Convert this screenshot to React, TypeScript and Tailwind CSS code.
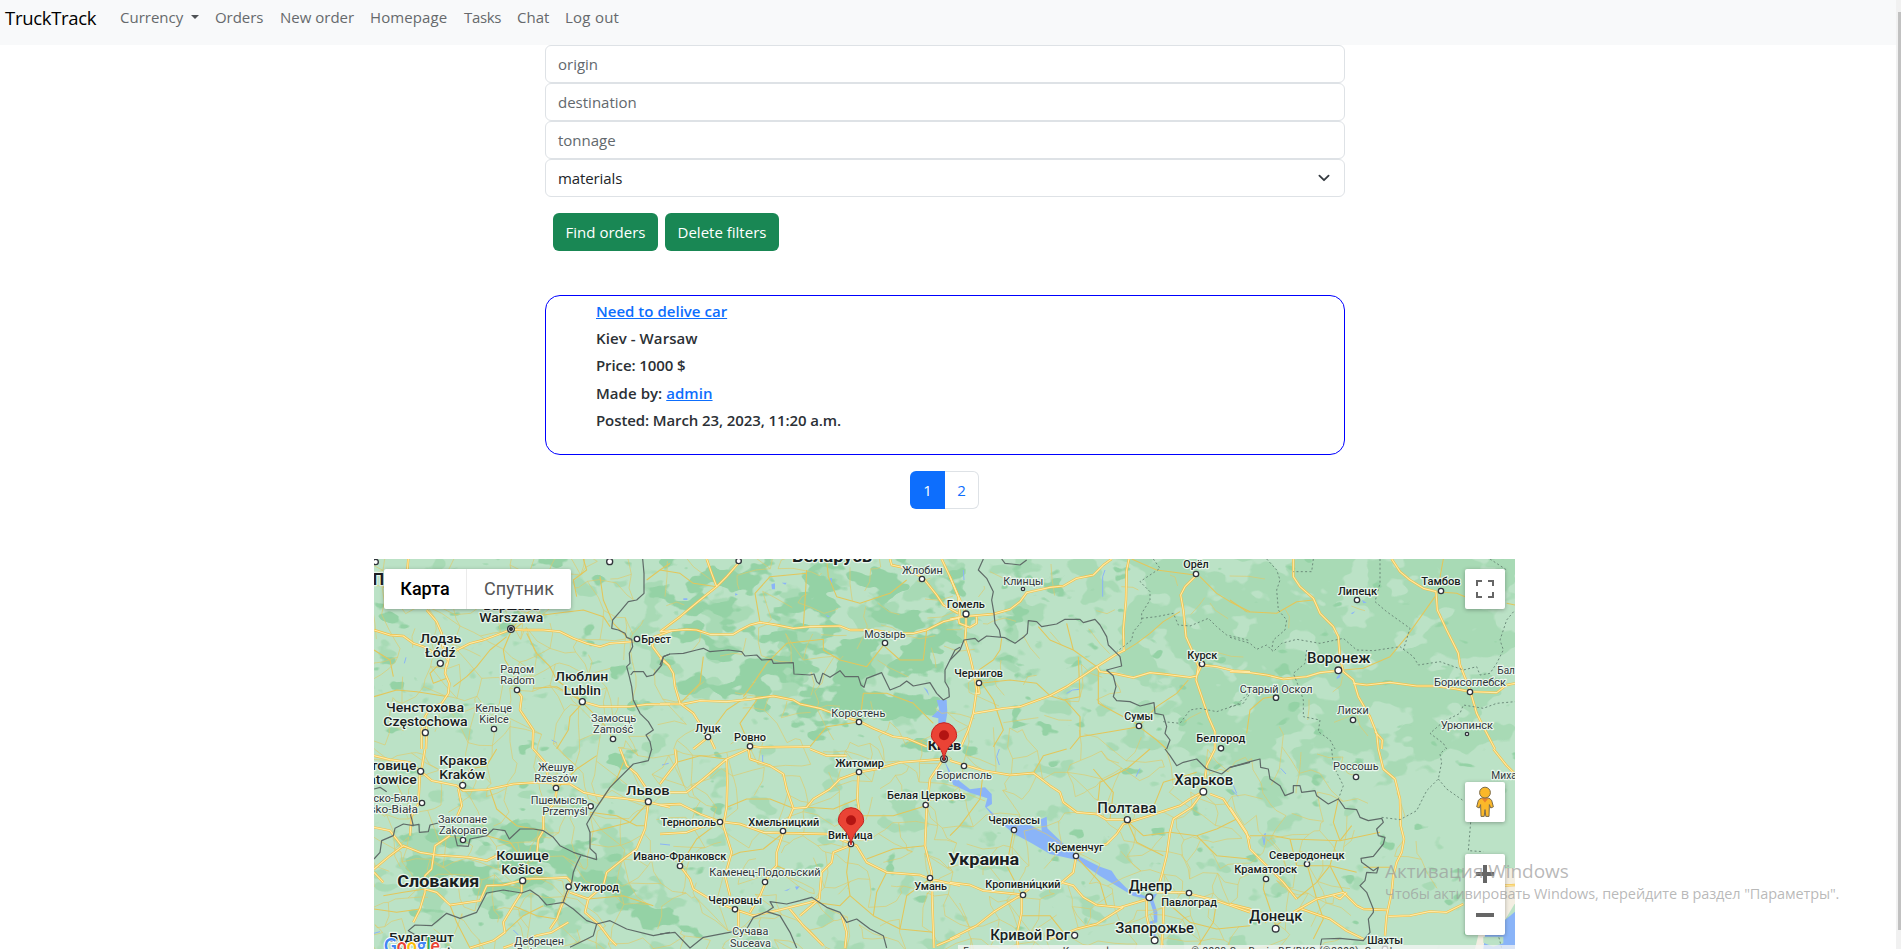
import React from "react";

type Tile = {
  x: number;
  y: number;
  major: string[];
  minor: string[];
  border: string[];
  dotted: string[];
};

/* Map geometry, drawn at three units per pixel and split in eight sheets. */
const tiles: Tile[] = [
  {
    x: 0,
    y: 0,
    major: [
      "M12 240L60 255 100 258 130 280 160 290 205 315",
      "M230 350L236 325 255 303 300 280 340 270 380 255 425 238 460 240 520 240 570 245 610 265 650 280 690 290 720 280 790 275",
      "M230 340L225 370 238 400 235 430 215 460 180 475 165 500 155 540 155 597",
      "M165 500L170 540 168 597",
      "M170 180L200 215 215 250 218 290 232 330",
      "M440 420L455 440 450 480 470 510 490 540 488 597",
      "M637 455L690 470 780 470 830 463 900 462",
      "M115 27L112 60",
      "M905 242L850 262 848 290 870 320 900 350",
    ],
    minor: [
      "M425 240L400 300 405 330 430 370 440 420",
      "M470 250L500 310 540 350 560 390 600 420 637 455",
      "M210 340L180 370 190 400 230 385",
      "M410 260L360 300 320 350 290 380 250 410",
      "M637 460L600 500 595 540 560 597",
      "M640 460L700 520 728 567",
      "M490 415L560 410 630 450",
      "M12 440L80 420 140 425 235 440",
      "M425 235L470 190 520 150 570 120 600 60",
      "M640 27L650 60 610 90 620 140",
      "M12 300L60 330 70 380",
      "M430 240L480 200 560 190 640 180 700 200 720 230",
      "M830 90L870 60 900 40",
      "M780 270L730 220 700 150 690 80",
    ],
    border: [
      "M818 27L822 70 822 130 800 150 775 155 750 185 728 210 725 235 745 240 765 250 770 262 785 268 788 290 778 310 780 340 770 350 778 380 785 410 790 450 800 470 810 490 835 515 850 540 828 555 840 575 845 600",
      "M782 375L790 365 820 365 830 380 850 375 875 345 880 320 900 312",
    ],
    dotted: [],
  },
  {
    x: 870,
    y: 0,
    major: [
      "M0 245L80 238 110 240 150 253 220 253 245 238 270 225 300 217 350 225 400 235 450 230 540 228 570 240 640 240 700 250 760 250 800 240 850 215 900 203",
      "M0 245L60 200 120 150 170 110 200 80 235 40",
      "M170 110L155 70 140 27",
      "M0 325L25 345 40 370 45 410 60 460 100 490 125 530 140 560",
      "M0 462L70 462 120 452 200 455 270 448 340 438 400 450 420 462 480 475 520 490 600 515 640 535 700 560 740 565 800 590",
      "M150 565L165 597",
      "M140 565L100 597",
      "M270 588L300 592 450 590",
      "M845 27L870 80 895 140 900 200",
      "M690 27L695 45 740 55 790 85 830 135 850 165 895 190",
    ],
    minor: [
      "M440 60L437 120 430 230",
      "M300 217L285 130 330 80 440 70",
      "M60 460L120 400 130 320",
      "M250 440L280 400 320 340 380 280 490 268 490 300 540 330 620 350 675 280",
      "M500 27L505 80 530 140 600 160 690 130 740 90",
      "M675 290L720 330 790 330 800 240",
      "M600 515L610 430 680 430 760 460 820 520",
      "M140 560L200 480 260 440",
      "M270 588L240 520 290 450",
      "M0 60L60 70 100 100 170 110",
      "M450 590L500 530 600 515",
    ],
    border: [
      "M0 345L10 320 30 312 70 310 110 300 130 295 150 305 205 300 245 305 255 318 290 315 305 330 335 328 340 340 400 338 402 372 450 375 462 372 470 395 478 402 488 370 510 382 540 362 555 380 595 380 603 405 612 412 620 385 665 368 690 420 720 408 740 393 760 408 810 398 830 430 850 450 868 440 866 415 855 395 855 360 870 330 885 300 900 292",
    ],
    dotted: [],
  },
  {
    x: 1740,
    y: 0,
    major: [
      "M0 80L30 150 48 190 48 230 45 270 60 320 72 370 80 420 70 490 55 540 30 597",
      "M85 400L88 430 76 430",
      "M72 490L160 475 210 470 300 437 350 410 440 350 495 315 525 300",
      "M522 300L520 240 528 150 530 60 537 27",
      "M0 207L40 200 130 192 180 178 210 155 230 128 300 112 340 108 380 85 430 75 460 45 485 27",
      "M25 200L28 220 60 232 80 220 80 200",
      "M440 350L450 365 500 372 550 383 600 368 640 372 720 382 740 378 755 345",
      "M755 345L800 350 850 362 900 365",
      "M740 75L705 110 692 135 700 180 708 260 730 310 745 350 738 390 755 440 775 500 795 545 795 597",
    ],
    minor: [
      "M520 305L560 280 600 250 640 215 690 185",
      "M750 80L800 130 840 155 900 185",
      "M130 590L160 540 130 450 75 370",
      "M90 400L180 390 260 400 300 437",
      "M265 230L300 270 370 300 440 350",
      "M155 265L150 300 130 330 72 370",
      "M445 360L445 460 500 490 567 525",
      "M345 450L390 500 390 560 360 597",
      "M390 560L480 545 567 530 620 570 650 597",
      "M715 390L680 430 620 470 570 525",
      "M545 27L620 60 735 75",
      "M370 300L350 220",
      "M385 320L390 440 340 450 300 437",
    ],
    border: [
      "M0 330L30 300 42 270 75 265 85 275 110 258 165 263 195 280 220 262 232 250 235 212 260 215 275 230 320 222 345 208 390 208 400 218 435 208 450 225 470 260 475 285 495 305 510 320 515 348 470 360 490 378 498 410 490 440 500 452 540 455 570 468 612 458 615 490 640 495 650 530 645 550 660 570 650 597",
      "M100 27L85 60 110 85 130 125 125 150 132 190 135 220 148 240 152 262",
      "M155 27L165 40 185 42 210 45 230 30",
    ],
    dotted: [
      "M610 27L630 55 600 75 570 95 600 125 600 150 575 190 575 215 550 245 545 270 520 290 500 305",
      "M575 205L620 200 670 190 685 225 720 228 775 205 800 230 830 255 900 272",
      "M640 515L690 520 720 480 750 475 800 485 860 465 890 435 900 420",
    ],
  },
  {
    x: 2580,
    y: 0,
    major: [
      "M190 27L190 80 210 110 250 145 270 190 310 230 325 260 330 320 340 365 370 390 385 440 420 500 440 550 445 597",
      "M435 545L457 570 455 597",
      "M485 27L510 65 540 90 580 115 618 125 622 180 650 240 685 310 690 345 720 420 740 490 760 530 795 597",
      "M0 365L60 368 110 375 160 387 230 380 270 368 325 362",
      "M370 400L410 405 480 397 560 408 620 408 680 417 720 425 800 428 830 405 855 400",
    ],
    minor: [
      "M340 360L400 355 480 320 530 260 590 175 615 140",
      "M0 150L50 185 140 190 200 155 250 150",
      "M50 550L60 480 100 445 130 440",
      "M620 125L680 130 705 140",
      "M830 160L855 165",
      "M640 27L625 110",
    ],
    border: [],
    dotted: [
      "M110 27L140 60 150 90 140 120 145 180 170 210 165 240 130 270 125 300",
      "M0 262L60 280 80 298 110 285 130 305 155 280 200 268 270 280 340 265 380 300 430 302 510 290 550 320 565 345 630 335 700 360 740 350 750 375 780 370 800 340 820 300 810 270 830 210 855 180",
      "M450 27L450 100 435 155 470 185 540 235 520 300",
      "M250 27L245 65 190 65",
      "M230 300L225 340 190 370 210 420 220 450 220 500 270 510 265 545 300 570 315 597",
      "M0 470L40 460 60 430",
      "M650 597L640 580 600 550 640 515 690 490 700 465 760 475 800 460 855 455",
      "M780 27L830 60",
    ],
  },
  {
    x: 0,
    y: 597,
    major: [
      "M12 20L60 32 120 40 150 65 185 95 260 110 280 125 350 122 430 105 500 100 600 105 640 130 700 143 760 148 830 158 900 175",
      "M12 360L60 320 100 290 150 310 200 318 300 325 350 335 380 320",
      "M12 235L60 245 95 290",
      "M12 370L40 400",
      "M500 320L505 270 520 245 520 200 555 160 560 120 535 90 525 40 490 0",
      "M165 0L155 60",
      "M265 120L275 170 262 200",
      "M120 260L125 200 145 165 150 70",
      "M165 420L200 430 240 468 330 455 350 410 400 408 455 395 455 430 430 470 400 520 405 550 370 575 300 597",
      "M455 390L530 388 590 385 605 400 575 470 560 510 540 540",
      "M600 430L655 450 700 410 710 370 760 330 800 300 825 240 835 160",
      "M655 450L645 490 690 530 720 570 740 590",
      "M240 260L195 290 185 360 165 380 165 430 150 480 130 520",
      "M750 0L770 50 800 75 830 120",
      "M400 597L500 560 545 550 595 520",
    ],
    minor: [
      "M360 122L380 180 440 230 520 245",
      "M560 120L620 60 680 20",
      "M660 190L740 200 800 230 825 230",
      "M450 320L420 280 350 260",
      "M40 440L100 430 165 420",
      "M12 480L80 490 150 480",
      "M240 468L260 520 300 597",
      "M430 470L500 500 560 510",
      "M835 160L780 220 700 240 660 250",
      "M380 0L350 50 300 60 270 110",
      "M700 143L740 90 760 40",
      "M655 450L760 440 850 470",
      "M405 550L460 500 520 470",
    ],
    border: [
      "M12 120L30 115 50 128",
      "M12 330L30 310 35 275 70 260 75 238 100 225 130 230 120 190",
      "M125 230L147 226 148 250 175 248 180 228 205 222",
      "M262 235L255 260 262 290 295 292 300 270 350 260 370 240 405 245 418 270 450 240 490 240 520 245 550 265 570 290 610 310 640 320 680 332 678 315 660 298 660 250 650 225 670 190 720 115 790 45 835 35 845 0",
      "M632 320L620 345 610 370 605 400 590 430 580 458",
      "M140 560L115 545 135 528 185 530 230 493 270 508 320 490 350 432 400 423 455 432 480 423 505 440 530 468 580 460 610 480 650 515 680 525 720 515 770 540 850 560 900 550",
      "M680 525L670 560 640 575 600 595",
    ],
    dotted: [],
  },
  {
    x: 870,
    y: 597,
    major: [
      "M0 130L80 130 130 90 200 30 265 0",
      "M200 30L202 100 200 175 190 230 215 310 195 380 210 440",
      "M265 0L270 30 330 50 370 75 380 120 400 178 370 250 350 310 350 350 330 370 300 440 270 490",
      "M400 178L440 175 460 150 510 120 540 90 595 70 650 60 720 40 850 30",
      "M450 0L500 20 560 20",
      "M595 80L592 150 600 200",
      "M0 168L60 165 120 195 180 218 240 225 310 250 370 252 500 255 550 275 590 290 620 340 680 370 780 378 810 390 900 410",
      "M0 255L80 250 120 235 180 220",
      "M570 290L520 310 515 340 485 370 478 450 420 500",
      "M60 350L90 390 100 420 150 450 220 480 280 500 350 485 450 460 480 450",
      "M235 480L235 540",
      "M850 30L810 90 800 180 795 290 815 370 817 460 822 597",
      "M45 0L50 40 0 105",
      "M385 475L430 530 490 590",
      "M545 500L560 550 555 597",
      "M830 590L900 560",
    ],
    minor: [
      "M200 30L120 20 50 40",
      "M200 175L260 150 330 150 400 178",
      "M180 218L110 270 60 350",
      "M370 252L310 300 240 310 215 320",
      "M350 350L420 380 480 360",
      "M570 290L560 370 570 440 640 500 720 540 820 550",
      "M680 370L650 430 640 500",
      "M798 170L700 200 600 200",
      "M810 390L740 440 720 540",
      "M795 290L700 300 620 330",
      "M592 150L520 180 440 175",
      "M460 460L540 470 570 440",
    ],
    border: [
      "M0 555L45 550 90 597 130 565 220 548 260 540 280 505 320 488 340 475 330 458 380 465 420 455 455 445 500 475 540 490 560 520 590 510 630 540 670 560 680 597",
      "M320 488L360 500 390 550 410 597",
    ],
    dotted: [],
  },
  {
    x: 1740,
    y: 597,
    major: [
      "M0 35L100 65 180 78 250 72 300 110 330 130 340 160 380 190 440 195 470 212 530 212",
      "M0 400L60 408 100 425 215 437",
      "M0 570L80 530 130 490 215 437 215 490 200 560 205 597",
      "M390 310L470 285 500 255 520 225 600 200 690 170 720 150 760 128",
      "M378 325L370 370 335 400 370 410 400 445 440 468 510 475 595 450",
      "M215 437L250 410 335 403",
      "M520 475L440 525 380 540 300 570",
      "M590 450L590 500 605 570",
      "M760 128L725 175 670 210 660 250 650 320 635 380 620 430",
      "M640 440L640 510 635 597",
      "M760 128L770 50 795 0",
      "M780 135L820 150 860 210 900 270",
      "M620 430L700 430 800 455 900 490",
    ],
    minor: [
      "M250 72L280 20 350 0",
      "M440 195L450 100 530 60 600 0",
      "M530 212L560 280 640 320",
      "M215 437L170 350 190 245",
      "M380 325L450 400 470 470",
      "M660 250L740 260 800 320 900 330",
      "M640 450L720 520 800 540 900 530",
      "M600 200L640 100 740 70",
      "M800 455L790 520 740 597",
      "M100 65L90 150 30 230 0 260",
      "M215 500L300 500 340 550",
      "M480 210L490 130 430 60",
      "M660 250L580 260 530 215",
      "M860 210L800 240 740 260",
    ],
    border: ["M645 0L660 20 680 50 700 40 740 30 770 60 815 75 840 55 900 40"],
    dotted: [],
  },
  {
    x: 2580,
    y: 597,
    major: [
      "M445 0L460 60 495 90 510 150 512 230 522 270 515 310 500 340 490 380 485 430 470 500 465 560",
      "M0 175L50 250 60 300 110 350 160 400 200 450",
      "M0 465L60 480 110 520",
      "M190 490L260 450 340 430 380 470 400 480 475 483",
      "M475 502L540 500 600 487 650 490 700 465",
      "M215 480L300 510 350 545 400 570",
      "M790 0L830 50 855 75",
      "M820 410L855 408",
      "M350 430L330 450 310 440",
    ],
    minor: [
      "M60 260L130 260 180 270 330 275 450 250",
      "M325 150L310 220 330 275 365 230",
      "M180 270L200 350 300 350 380 370",
      "M231 345L260 450",
      "M400 355L480 355",
      "M110 350L100 420 137 530",
      "M200 450L260 400 300 350",
      "M260 450L280 510 250 570",
      "M137 530L215 480",
      "M320 275L300 350 340 430",
    ],
    border: [
      "M0 55L60 38 90 30 92 55 115 60 120 90 150 110 165 140 190 130 190 110 210 110 215 130 255 125 260 140 295 165 325 150 345 178 380 182 390 205 415 215 455 208 460 220 440 240 445 260 465 265 460 285 430 322 393 328 395 340 430 365 445 355 440 372 410 370 405 395 390 410 410 430 430 480 430 490 415 510 420 550 400 575 330 568 275 570 270 597",
    ],
    dotted: [
      "M305 0L310 50 340 110 325 150",
      "M455 205L510 212 560 185 590 125 625 90 635 40 630 15 645 0",
      "M625 90L650 120 700 155",
      "M722 220L715 305 760 308",
      "M800 540L815 597",
    ],
  },
];

type Label = {
  t: string;
  x: number;
  y: number;
  w: number;
  s?: number;
  b?: number;
};

const L = (t: string, x: number, y: number, w: number, s = 33, b = 400): Label => ({ t, x, y, w, s, b });

/* x is the left edge of the label, y its baseline. */
const labels: Label[] = [
  L("П", 8, 105, 34, 50, 700),
  L("Варшава", 340, 180, 168, 41, 500),
  L("Warszawa", 328, 216, 192, 41, 500),
  L("Лодзь", 150, 280, 124, 41, 500),
  L("Łódź", 165, 321, 92, 41, 500),
  L("Радом", 391, 368, 101),
  L("Radom", 391, 402, 103),
  L("Люблин", 555, 394, 160, 41, 500),
  L("Lublin", 581, 435, 112, 41, 500),
  L("Ченстохова", 48, 486, 234, 41, 500),
  L("Częstochowa", 40, 528, 253, 41, 500),
  L("Кельце", 316, 486, 110),
  L("Kielce", 328, 518, 88),
  L("Замосць", 663, 517, 136),
  L("Zamość", 669, 548, 121),
  L("Брест", 814, 279, 89, 34, 500),
  L("Беларусь", 1266, 36, 240, 50, 700),
  L("Жлобин", 1596, 71, 122),
  L("Мозырь", 1483, 264, 124),
  L("Коростень", 1384, 500, 162),
  L("Луцк", 976, 546, 76, 33, 500),
  L("Ровно", 1092, 572, 96, 33, 500),
  L("Киев", 1673, 599, 101, 41, 700),
  L("Клинцы", 1900, 104, 120),
  L("Гомель", 1730, 173, 115, 33, 500),
  L("Орёл", 2440, 54, 76, 33, 500),
  L("Курск", 2452, 327, 90, 33, 500),
  L("Чернигов", 1753, 381, 146, 33, 500),
  L("Сумы", 2263, 509, 86, 33, 500),
  L("Белгород", 2479, 576, 147, 33, 500),
  L("Липецк", 2904, 135, 117, 33, 500),
  L("Тамбов", 3154, 105, 118, 33, 500),
  L("Воронеж", 2811, 340, 190, 43, 500),
  L("Старый Оскол", 2609, 429, 219),
  L("Борисоглебск", 3192, 408, 216),
  L("Балашов", 3382, 372, 128),
  L("Лиски", 2901, 491, 95),
  L("Урюпинск", 3212, 536, 157),
  L("Катовице", -46, 660, 185, 41, 500),
  L("Katowice", -32, 702, 172, 41, 500),
  L("Краков", 208, 645, 144, 41, 500),
  L("Kraków", 208, 687, 138, 41, 500),
  L("Жешув", 504, 663, 108),
  L("Rzeszów", 493, 696, 129),
  L("Бельско-Бяла", -62, 755, 206),
  L("Bielsko-Biała", -60, 789, 204),
  L("Пшемысль", 482, 762, 170),
  L("Przemyśl", 517, 794, 136),
  L("Закопане", 204, 818, 147),
  L("Zakopane", 207, 852, 145),
  L("Кошице", 379, 930, 157, 41, 500),
  L("Košice", 394, 972, 125, 41, 500),
  L("Словакия", 82, 1011, 246, 49, 700),
  L("Ужгород", 611, 1022, 136, 33, 500),
  L("Будапешт", 58, 1176, 194, 41, 500),
  L("Budapest", 72, 1218, 172, 41, 500),
  L("Дебрецен", 433, 1184, 149),
  L("Debrecen", 440, 1217, 140),
  L("Львов", 768, 735, 131, 41, 500),
  L("Ивано-Франковск", 790, 929, 279, 33, 500),
  L("Тернополь", 872, 827, 166, 33, 500),
  L("Хмельницкий", 1135, 827, 213, 33, 500),
  L("Житомир", 1396, 651, 146, 33, 500),
  L("Борисполь", 1699, 686, 167),
  L("Белая Церковь", 1551, 746, 236, 33, 500),
  L("Винница", 1374, 867, 134, 33, 500),
  L("Каменец-Подольский", 1018, 977, 334),
  L("Черновцы", 1015, 1061, 161, 33, 500),
  L("Сучава", 1087, 1156, 108),
  L("Suceava", 1080, 1190, 123),
  L("Умань", 1633, 1021, 98, 33, 500),
  L("Украина", 1735, 944, 213, 51, 700),
  L("Черкассы", 1855, 821, 155, 33, 500),
  L("Полтава", 2182, 790, 178, 42, 500),
  L("Харьков", 2413, 704, 177, 42, 500),
  L("Кременчуг", 2034, 903, 167, 33, 500),
  L("Кропивни́цкий", 1846, 1015, 225, 33, 500),
  L("Днепр", 2276, 1024, 131, 42, 500),
  L("Павлоград", 2374, 1069, 167, 33, 500),
  L("Кривой Рог", 1861, 1171, 239, 42, 500),
  L("Запорожье", 2236, 1149, 236, 42, 500),
  L("Россошь", 2889, 661, 137),
  L("Михайловка", 3364, 688, 180),
  L("Северодонецк", 2697, 926, 227, 33, 500),
  L("Краматорск", 2593, 968, 188, 33, 500),
  L("Донецк", 2638, 1114, 159, 43, 500),
  L("Шахты", 2992, 1181, 107, 33, 500),
];

const dots: [number, number, number][] = [
  [211, 340, 9], [441, 420, 8], [637, 455, 9], [166, 548, 9], [372, 537, 8], [729, 567, 8], [801, 267, 8],
  [17, 36, 8], [719, 35, 9], [1106, 33, 8], [1656, 87, 8], [1545, 279, 8], [1467, 516, 8], [1014, 561, 8],
  [1140, 589, 8], [1788, 192, 9], [1959, 117, 5], [2478, 72, 8], [2496, 342, 8], [1827, 399, 8], [2307, 528, 8],
  [2553, 595, 8], [2961, 150, 8], [3213, 123, 8], [2905, 361, 10], [2718, 443, 8], [3300, 426, 8], [2949, 510, 8],
  [3291, 552, 5], [152, 664, 9], [278, 706, 9], [558, 714, 8], [156, 759, 8], [662, 769, 8], [279, 870, 8],
  [458, 992, 9], [596, 1010, 8], [835, 755, 9], [930, 948, 8], [1050, 816, 8], [1239, 843, 8], [1467, 666, 8],
  [1782, 648, 8], [1667, 765, 8], [1443, 882, 8], [1185, 996, 8], [1095, 1078, 8], [1680, 984, 8], [1932, 840, 8],
  [2272, 809, 9], [2500, 725, 10], [2118, 918, 8], [1959, 1035, 8], [2338, 1042, 10], [2457, 1029, 8],
  [2114, 1156, 9], [2354, 1171, 10], [2958, 681, 8], [2811, 942, 8], [2688, 987, 8], [2717, 1136, 10], [3045, 1196, 8],
];

/* Deterministic pseudo random numbers for the web of local roads. */
function localRoads(): string {
  let seed = 7;
  const rnd = () => {
    seed = (seed * 16807) % 2147483647;
    return seed / 2147483647;
  };
  const step = 62;
  const cols = 57;
  const rows = 21;
  const pts: [number, number][][] = [];
  for (let r = 0; r < rows; r++) {
    const row: [number, number][] = [];
    for (let c = 0; c < cols; c++) {
      row.push([Math.round(c * step + (rnd() - 0.5) * 60), Math.round(r * step + (rnd() - 0.5) * 60)]);
    }
    pts.push(row);
  }
  const density = (x: number, y: number) => {
    if (x > 2950) return 0.02;
    if (x > 2250 && y < 620) return 0.05;
    if (y < 540 && x > 800) return 0.2;
    return 0.55;
  };
  let d = "";
  const link = (a: [number, number], b: [number, number]) => {
    const k = rnd();
    const mx = Math.round((a[0] + b[0]) / 2 + (rnd() - 0.5) * 22);
    const my = Math.round((a[1] + b[1]) / 2 + (rnd() - 0.5) * 22);
    if (k < density(mx, my)) d += `M${a[0]} ${a[1]}L${mx} ${my} ${b[0]} ${b[1]}`;
  };
  for (let r = 0; r < rows - 1; r++) {
    for (let c = 0; c < cols - 1; c++) {
      link(pts[r][c], pts[r][c + 1]);
      link(pts[r][c], pts[r + 1][c]);
      if ((r + c) % 3 === 0) link(pts[r][c], pts[r + 1][c + 1]);
    }
  }
  return d;
}

const web = localRoads();

function Pin({ x, y }: { x: number; y: number }) {
  return (
    <g transform={`translate(${x} ${y})`}>
      <path
        d="M0 0C-4 -26 -12 -36 -24 -50C-32 -59 -38 -63 -38 -74A38 38 0 0 1 38 -74C38 -63 32 -59 24 -50C12 -36 4 -26 0 0Z"
        fill="#ea4335"
        stroke="#c5221f"
        strokeWidth="3"
      />
      <circle cx="0" cy="-74" r="15" fill="#b31412" />
    </g>
  );
}

function MapCanvas() {
  const sheets = (key: "major" | "minor" | "border" | "dotted") =>
    tiles.map((t, i) => <path key={i} transform={`translate(${t.x} ${t.y})`} d={t[key].join("")} />);
  return (
    <svg className="block h-full w-full" viewBox="12 27 3423 1170" preserveAspectRatio="none" fontFamily="Roboto, sans-serif">
      <defs>
        <filter id="meadow" x="0" y="0" width="3435" height="1200" filterUnits="userSpaceOnUse" colorInterpolationFilters="sRGB">
          <feGaussianBlur in="SourceGraphic" stdDeviation="28" result="d" />
          <feTurbulence type="fractalNoise" baseFrequency="0.009 0.013" numOctaves="3" seed="4" result="n" />
          <feComposite in="n" in2="d" operator="arithmetic" k2="1" k3="0.5" k4="-0.29" />
          <feComponentTransfer result="m">
            <feFuncA type="linear" slope="22" intercept="-9.6" />
          </feComponentTransfer>
          <feFlood floodColor="#a8dab5" />
          <feComposite in2="m" operator="in" />
        </filter>
        <filter id="forest" x="0" y="0" width="3435" height="1200" filterUnits="userSpaceOnUse" colorInterpolationFilters="sRGB">
          <feGaussianBlur in="SourceGraphic" stdDeviation="22" result="d" />
          <feTurbulence type="fractalNoise" baseFrequency="0.01 0.016" numOctaves="3" seed="21" result="n" />
          <feComposite in="n" in2="d" operator="arithmetic" k2="1" k3="0.5" k4="-0.32" />
          <feComponentTransfer result="m">
            <feFuncA type="linear" slope="22" intercept="-9.6" />
          </feComponentTransfer>
          <feFlood floodColor="#94d2a5" />
          <feComposite in2="m" operator="in" />
        </filter>
      </defs>

      <rect x="0" y="0" width="3440" height="1200" fill="#bbe2c6" />
      <g filter="url(#meadow)">
        <rect width="3435" height="1200" fillOpacity="0.11" />
        <path d="M2250 0H3435V600L2950 620 2700 660 2300 520Z" fillOpacity="0.64" />
        <path d="M850 0H2250V500H850Z" fillOpacity="0.26" />
        <path d="M1150 760L1600 740 2000 780 2000 860 1500 880 1150 840Z" fillOpacity="0.3" />
        <path d="M0 800L700 800 1000 1100 700 1150 0 1050Z" fillOpacity="0.38" />
        <path d="M2250 560L2900 560 2900 800 2300 760Z" fillOpacity="0.2" />
      </g>
      <g filter="url(#forest)">
        <rect width="3435" height="1200" fillOpacity="0.04" />
        <path d="M860 27H1740V330L1700 560 1300 560 900 400Z" fillOpacity="0.48" />
        <path d="M1200 300H1680L1650 480 1250 560Z" fillOpacity="0.3" />
        <path d="M1750 27H2260V160L1900 260 2100 400 1760 330Z" fillOpacity="0.28" />
        <path d="M60 840L420 820 600 850 680 930 900 1060 1000 1150 860 1160 640 990 400 1080 140 1010Z" fillOpacity="0.62" />
        <path d="M620 597L860 597 760 720Z" fillOpacity="0.25" />
        <path d="M12 27H860V500H12Z" fillOpacity="0.1" />
        <path d="M1740 500L1850 597 1900 720 1790 700Z" fillOpacity="0.25" />
      </g>

      <g fill="#8ab4f8">
        <path d="M1700 450L1730 450 1732 490 1722 545 1705 540 1705 505 1685 500 1708 478Z" />
        <path d="M1722 630L1745 672 1765 690 1800 718 1845 712 1865 732 1866 762 1850 772 1880 800 1920 825 1980 825 2015 842 2012 808 2030 800 2032 835 2060 862 2085 885 2120 915 2190 950 2225 962 2240 985 2270 1015 2330 1040 2362 1030 2350 1050 2362 1085 2362 1117 2350 1120 2360 1175 2350 1175 2338 1115 2352 1110 2350 1085 2338 1048 2290 1038 2235 1005 2190 978 2120 930 2040 912 1985 880 1930 850 1870 800 1845 770 1852 745 1800 728 1750 705Z" />
        <path d="M2900 382L2912 368 2910 382 2900 388Z" />
        <path d="M2976 150L2990 158 2980 160ZM2942 190L2956 184 2948 192Z" />
        <path d="M1204 103L1215 100 1215 118 1206 118ZM1235 98H1250L1246 104ZM1380 85L1386 84 1386 98 1381 96ZM1366 194L1380 199 1374 202ZM940 145H952V150H940ZM1095 130L1104 133 1096 137Z" />
        <path d="M1660 410L1678 438 1672 420ZM1615 450L1632 452 1620 455ZM1242 1022L1262 1015 1252 1022ZM1275 1010L1290 1008 1280 1020Z" />
      </g>
      <g fill="none" stroke="#8ab4f8" strokeWidth="3">
        <path d="M2198 140L2198 80 2205 60M1782 90L1780 60M2090 430L2108 420 2128 418M2682 880L2678 860 2686 850 2682 885M2732 655L2748 672M2585 720L2605 740M1888 645L1880 620 1888 597M2298 680L2310 655M103 340L108 322M12 1150L30 1145M430 1140L445 1155M545 570L560 578M1178 640V615M876 645L896 640M870 882L900 885M2590 706L2600 730" />
      </g>
      <path d="M3405 955H3435V1060L3405 1110Z" fill="#f3eee2" />
      <path d="M3405 1110L3435 1085V1200H3320L3330 1150 3400 1150Z" fill="#8ab4f8" />
      <path d="M3315 1197L3325 1155 3345 1155 3340 1197Z" fill="#f3eee2" />
      <path d="M3340 1160H3400V1180L3370 1190 3340 1178Z" fill="#bbe2c6" />

      <path d={web} fill="none" stroke="#dfca68" strokeOpacity="0.8" strokeWidth="2.4" strokeLinejoin="round" />
      <g fill="none" stroke="#e3c65a" strokeWidth="3.2" strokeLinejoin="round">{sheets("minor")}</g>
      <g fill="none" stroke="#f0bf48" strokeWidth="7.2" strokeLinejoin="round">{sheets("major")}</g>
      <g fill="none" stroke="#ffe9a3" strokeWidth="3.4" strokeLinejoin="round">{sheets("major")}</g>
      <g fill="none" stroke="#5f6b68" strokeWidth="3.6" strokeLinejoin="round">{sheets("border")}</g>
      <g fill="none" stroke="#6d8c7b" strokeWidth="3" strokeDasharray="6 7">{sheets("dotted")}</g>

      <g fill="#fff" stroke="#30343a" strokeWidth="4">
        {dots.map(([x, y, r]) => (
          <circle key={`${x}-${y}`} cx={x} cy={y} r={r} />
        ))}
        {[[423, 237], [1722, 627]].map(([x, y]) => (
          <g key={x}>
            <circle cx={x} cy={y} r="10" />
            <circle cx={x} cy={y} r="4.5" fill="#30343a" />
          </g>
        ))}
      </g>

      <g stroke="#e9f6ed" strokeWidth="7" strokeLinejoin="round" style={{ paintOrder: "stroke" }}>
        {labels.map((l) => (
          <text
            key={l.t}
            x={l.x}
            y={l.y}
            fontSize={l.s}
            fontWeight={l.b}
            textLength={l.w}
            lengthAdjust="spacingAndGlyphs"
            fill={l.b === 400 ? "#31363b" : "#1a1e22"}
          >
            {l.t}
          </text>
        ))}
      </g>

      <Pin x={1722} y={630} />
      <Pin x={1443} y={885} />

      <rect x="1764" y="1185" width="1671" height="12" fill="#f5f5f5" fillOpacity="0.75" />
      <g fill="#333" fontSize="30">
        <text x="1780" y="1216" textLength="250">Быстрые клавиши</text>
        <text x="2078" y="1216" textLength="370">Картографические данные</text>
        <text x="2464" y="1216" textLength="620">© 2023 GeoBasis-DE/BKG (©2009), Google</text>
      </g>
      <text
        x="42"
        y="1208"
        textLength="168"
        lengthAdjust="spacingAndGlyphs"
        fontSize="60"
        fontWeight="700"
        fontFamily="Lato, sans-serif"
        stroke="#fff"
        strokeWidth="6"
        style={{ paintOrder: "stroke" }}
      >
        <tspan fill="#4285f4">G</tspan>
        <tspan fill="#ea4335">o</tspan>
        <tspan fill="#fbbc04">o</tspan>
        <tspan fill="#4285f4">g</tspan>
        <tspan fill="#34a853">l</tspan>
        <tspan fill="#ea4335">e</tspan>
      </text>
    </svg>
  );
}

function Pegman() {
  return (
    <svg className="h-[32px] w-[18px]" viewBox="0 0 18 32">
      <path
        d="M5 12.2H13L15.6 14.2 17.4 20.8 14.8 22 13.4 18.6 13 30.4H9.8L9 23.6 8.2 30.4H5L4.6 18.6 3.2 22 0.7 20.8 2.4 14.2Z"
        fill="#fbb829"
        stroke="#7a6a4a"
        strokeWidth="1"
      />
      <path d="M5.5 12.3H12.5L9 16.5Z" fill="#e8812d" />
      <circle cx="9" cy="6.6" r="5.4" fill="#fbb829" stroke="#7a6a4a" strokeWidth="1" />
    </svg>
  );
}

const fields = ["origin", "destination", "tonnage"];

export default function App() {
  return (
    <div className="relative flex h-[949px] w-full flex-col overflow-hidden bg-white font-['Open_Sans',sans-serif] text-[15px] text-[#212529]">
      <nav className="flex h-[45px] w-full shrink-0 items-start bg-[#f8f9fa] pt-[5px] pl-[5px] leading-6 text-[#66696c]">
        <a className="w-[115px] text-[18.5px] leading-[26px] tracking-[-0.3px] text-black">TruckTrack</a>
        <a className="flex w-[95px] items-center">
          Currency
          <span className="ml-[8px] border-x-4 border-t-4 border-x-transparent border-t-[#4f5255]" />
        </a>
        <a className="w-[65px] tracking-[-0.05px]">Orders</a>
        <a className="w-[90px]">New order</a>
        <a className="w-[94px] tracking-[0.1px]">Homepage</a>
        <a className="w-[53px] tracking-[-0.35px]">Tasks</a>
        <a className="w-[48px]">Chat</a>
        <a className="tracking-[0.25px]">Log out</a>
      </nav>

      <div className="flex w-[1890px] flex-col items-center">
        <form className="flex w-[800px] flex-col">
          {fields.map((name) => (
            <div key={name} className="flex h-[38px] items-center rounded-md border border-[#dee2e6] px-3 text-[#62686d]">
              {name}
            </div>
          ))}
          <div className="flex h-[38px] items-center justify-between rounded-md border border-[#dee2e6] px-3 tracking-[-0.1px]">
            materials
            <svg className="h-4 w-4" viewBox="0 0 16 16" fill="none" stroke="#343a40" strokeWidth="1.8" strokeLinecap="round" strokeLinejoin="round">
              <path d="m3.4 5.6 4.6 4.6 4.6-4.6" />
            </svg>
          </div>
          <div className="mt-4 flex gap-[7px] pl-2 text-white">
            <span className="flex h-[38px] w-[105px] items-center justify-center rounded-md bg-[#198754]">Find orders</span>
            <span className="flex h-[38px] w-[114px] items-center justify-center rounded-md bg-[#198754]">Delete filters</span>
          </div>
        </form>

        <section className="mt-11 flex h-[160px] w-[800px] shrink-0 flex-col rounded-[15px] border border-[#0000ff] pt-[2px] pl-[50px] font-semibold leading-[27.2px] text-[#2b3035]">
          <p className="tracking-[0.02px]"><a className="text-[#0d6efd] underline">Need to delive car</a></p>
          <p className="tracking-[0.08px]">Kiev - Warsaw</p>
          <p className="tracking-[-0.1px]">Price: 1000 $</p>
          <p className="tracking-[0.05px]">Made by: <a className="text-[#0d6efd] underline">admin</a></p>
          <p className="tracking-[-0.1px]">Posted: March 23, 2023, 11:20 a.m.</p>
        </section>

        <div className="mt-4 mr-px flex h-[38px] shrink-0">
          <span className="flex w-[35px] items-center justify-center rounded-l-md bg-[#0d6efd] text-white">1</span>
          <span className="flex w-[34px] items-center justify-center rounded-r-md border border-l-0 border-[#dee2e6] text-[#0d6efd]">2</span>
        </div>

        <div className="relative mt-[50px] mr-px h-[390px] w-[1141px] shrink-0 overflow-hidden font-[Roboto,sans-serif]">
          <MapCanvas />
          <div className="absolute top-[10px] left-[10px] flex h-10 rounded-[2px] bg-white text-[18px] shadow-[0_1px_4px_rgba(0,0,0,0.3)]">
            <span className="flex w-[83px] items-center justify-center border-r border-[#ebebeb] pb-px font-medium text-black">Карта</span>
            <span className="flex w-[104px] items-center justify-center pb-px text-[#565656]">Спутник</span>
          </div>
          <div className="absolute top-[10px] right-[10px] flex h-10 w-10 items-center justify-center rounded-[2px] bg-white shadow-[0_1px_4px_rgba(0,0,0,0.3)]">
            <svg className="h-[18px] w-[18px]" viewBox="0 0 18 18" fill="#666">
              <path d="M0 0v6h2V2h4V0zM16 0h-4v2h4v4h2V0zM16 16h-4v2h6v-6h-2zM2 12H0v6h6v-2H2z" />
            </svg>
          </div>
          <div className="absolute right-[10px] bottom-[127px] flex h-10 w-10 items-center justify-center rounded-[2px] bg-white shadow-[0_1px_4px_rgba(0,0,0,0.3)]">
            <Pegman />
          </div>
          <div className="absolute right-[10px] bottom-[14px] flex h-[81px] w-10 flex-col items-center justify-between rounded-[2px] bg-white py-[11px] shadow-[0_1px_4px_rgba(0,0,0,0.3)]">
            <svg className="h-[18px] w-[18px]" viewBox="0 0 18 18" fill="#666">
              <path d="M7 0h4v7h7v4h-7v7H7v-7H0V7h7z" />
            </svg>
            <svg className="h-[18px] w-[18px]" viewBox="0 0 18 18" fill="#666">
              <path d="M0 7h18v4H0z" />
            </svg>
          </div>
        </div>
      </div>

      <div className="absolute top-0 right-0 h-full w-[5px] bg-[#f1f1f1] pt-[12px] pl-[2px]">
        <div className="h-[918px] bg-[#c1c1c1]" />
      </div>

      <div className="absolute top-[857px] left-[1385px] whitespace-nowrap text-[#9a9a9a]/70">
        <p className="text-[19px] leading-[28px] tracking-[-0.05px]">Активация Windows</p>
        <p className="text-[14.5px] leading-[18px] tracking-[-0.12px]">Чтобы активировать Windows, перейдите в раздел "Параметры".</p>
      </div>
    </div>
  );
}
